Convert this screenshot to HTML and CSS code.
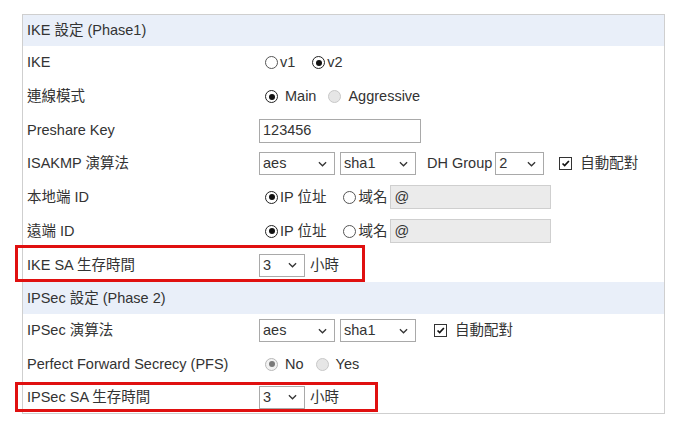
FILE: index.html
```html
<!DOCTYPE html>
<html>
<head>
<meta charset="utf-8">
<link rel="stylesheet" href="styles.css">
</head>
<body>
<div class="panel">
  <div class="row head"><div class="lbl">IKE 設定 (Phase1)</div></div>

  <div class="row">
    <div class="lbl">IKE</div>
    <div class="val">
      <span class="opt"><span class="radio"></span><span class="t">v1</span></span>
      <span class="opt"><span class="radio on"></span><span class="t">v2</span></span>
    </div>
  </div>

  <div class="row">
    <div class="lbl">連線模式</div>
    <div class="val">
      <span class="opt sp"><span class="radio on"></span><span class="t">Main</span></span>
      <span class="opt sp"><span class="radio dis"></span><span class="t">Aggressive</span></span>
    </div>
  </div>

  <div class="row">
    <div class="lbl">Preshare Key</div>
    <div class="val"><span class="input key">123456</span></div>
  </div>

  <div class="row">
    <div class="lbl">ISAKMP 演算法</div>
    <div class="val">
      <span class="select w76">aes<svg class="chev" viewBox="0 0 10 6"><path d="M1 1l4 4 4-4"/></svg></span>
      <span class="select w76">sha1<svg class="chev" viewBox="0 0 10 6"><path d="M1 1l4 4 4-4"/></svg></span>
      <span class="txt dh">DH Group</span>
      <span class="select w49">2<svg class="chev" viewBox="0 0 10 6"><path d="M1 1l4 4 4-4"/></svg></span>
      <span class="check"><svg viewBox="0 0 13 13"><path d="M3 6.5l2.5 2.5 5-5.5"/></svg></span>
      <span class="txt auto">自動配對</span>
    </div>
  </div>

  <div class="row">
    <div class="lbl">本地端 ID</div>
    <div class="val">
      <span class="opt"><span class="radio on"></span><span class="t">IP 位址</span></span>
      <span class="opt"><span class="radio"></span><span class="t">域名</span></span>
      <span class="input gray">@</span>
    </div>
  </div>

  <div class="row">
    <div class="lbl">遠端 ID</div>
    <div class="val">
      <span class="opt"><span class="radio on"></span><span class="t">IP 位址</span></span>
      <span class="opt"><span class="radio"></span><span class="t">域名</span></span>
      <span class="input gray">@</span>
    </div>
  </div>

  <div class="row mark">
    <div class="lbl">IKE SA 生存時間</div>
    <div class="val">
      <span class="select w46">3<svg class="chev" viewBox="0 0 10 6"><path d="M1 1l4 4 4-4"/></svg></span>
      <span class="txt hr">小時</span>
    </div>
    <div class="redbox rb1"></div>
  </div>

  <div class="row head"><div class="lbl">IPSec 設定 (Phase 2)</div></div>

  <div class="row">
    <div class="lbl">IPSec 演算法</div>
    <div class="val">
      <span class="select w76">aes<svg class="chev" viewBox="0 0 10 6"><path d="M1 1l4 4 4-4"/></svg></span>
      <span class="select w76">sha1<svg class="chev" viewBox="0 0 10 6"><path d="M1 1l4 4 4-4"/></svg></span>
      <span class="check c2"><svg viewBox="0 0 13 13"><path d="M3 6.5l2.5 2.5 5-5.5"/></svg></span>
      <span class="txt auto">自動配對</span>
    </div>
  </div>

  <div class="row">
    <div class="lbl">Perfect Forward Secrecy (PFS)</div>
    <div class="val">
      <span class="opt sp"><span class="radio dis on"></span><span class="t">No</span></span>
      <span class="opt sp"><span class="radio dis"></span><span class="t">Yes</span></span>
    </div>
  </div>

  <div class="row mark">
    <div class="lbl">IPSec SA 生存時間</div>
    <div class="val">
      <span class="select w46">3<svg class="chev" viewBox="0 0 10 6"><path d="M1 1l4 4 4-4"/></svg></span>
      <span class="txt hr">小時</span>
    </div>
    <div class="redbox rb2"></div>
  </div>
</div>
</body>
</html>
```

FILE: styles.css
```css
html, body {
  margin: 0;
  padding: 0;
  background: #fff;
}
body {
  font-family: "Liberation Sans", Arial, "Noto Sans CJK TC", sans-serif;
  font-size: 14.5px;
  line-height: 17px;
  color: #333;
}
.panel {
  margin: 14px 0 0 22px;
  width: 641px;
  height: 398px;
  border: 1px solid #cfcfcf;
  display: grid;
  grid-template-rows: 31px 33px 35px 33px 33px 34px 34px 34px 32px 33px 34px 32px;
}
.row {
  position: relative;
  display: grid;
  grid-template-columns: 236px 1fr;
  align-items: center;
}
.row.head {
  background: #e9eff9;
}
.lbl {
  padding-left: 4px;
  white-space: nowrap;
}
.val {
  display: flex;
  align-items: center;
  white-space: nowrap;
}
.opt {
  display: inline-flex;
  align-items: center;
  margin-left: 6px;
  margin-right: 11px;
}
.opt .t {
  margin-left: 2px;
}
.opt.sp .t {
  margin-left: 7px;
}
.opt.sp {
  margin-right: 6px;
}
.radio {
  width: 13px;
  height: 13px;
  box-sizing: border-box;
  border: 1px solid #555;
  border-radius: 50%;
  background: #fff;
  position: relative;
  display: inline-block;
  flex: none;
}
.radio.on {
  border-color: #222;
}
.radio.on::after {
  content: "";
  position: absolute;
  left: 2.5px;
  top: 2.5px;
  width: 6px;
  height: 6px;
  border-radius: 50%;
  background: #111;
}
.radio.dis {
  border-color: #c8c8c8;
  background: #e6e6e6;
}
.radio.dis.on {
  background: #f2f2f2;
  border-color: #b8b8b8;
}
.radio.dis.on::after {
  background: #7a7a7a;
}
.input {
  box-sizing: border-box;
  height: 24px;
  border: 1px solid #a9a9a9;
  display: inline-flex;
  align-items: center;
  padding-left: 3px;
  background: #fff;
}
.input.key {
  width: 162px;
}
.input.gray {
  width: 161px;
  background: #ebebeb;
  border-color: #cfcfcf;
  margin-left: -8px;
}
.select {
  box-sizing: border-box;
  height: 23px;
  border: 1px solid #a9a9a9;
  display: inline-flex;
  align-items: center;
  justify-content: space-between;
  padding: 0 7px 0 3px;
  background: #fff;
  margin-right: 5px;
}
.select.w76 { width: 76px; }
.select.w49 { width: 49px; }
.select.w46 { width: 46px; }
.chev {
  width: 9px;
  height: 6px;
  fill: none;
  stroke: #333;
  stroke-width: 1.4;
}
.txt.dh {
  margin-left: 6px;
  margin-right: 3px;
}
.check {
  width: 13px;
  height: 13px;
  box-sizing: border-box;
  border: 1px solid #333;
  background: #fff;
  display: inline-block;
  margin-left: 10px;
}
.check.c2 {
  margin-left: 13px;
}
.check svg {
  display: block;
  width: 11px;
  height: 11px;
  fill: none;
  stroke: #111;
  stroke-width: 2;
}
.txt.auto {
  margin-left: 8px;
}
.txt.hr {
  margin-left: 0;
}
.redbox {
  position: absolute;
  border: 3px solid #e01010;
  box-sizing: border-box;
  pointer-events: none;
}
.rb1 {
  left: -8px;
  top: -3px;
  width: 350px;
  height: 37px;
}
.rb2 {
  left: -8px;
  top: 1px;
  width: 363px;
  height: 30px;
}
```
